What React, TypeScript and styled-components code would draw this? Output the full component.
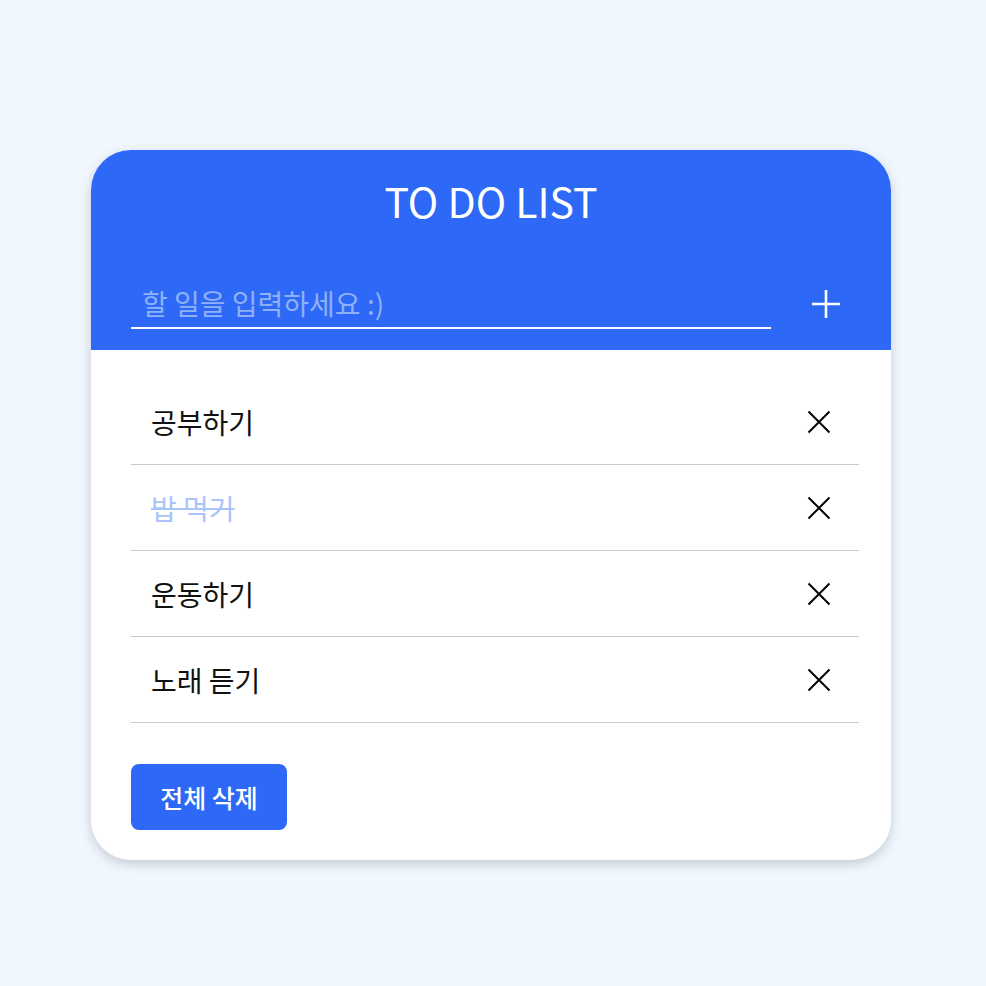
import React from "react";
import styled, { createGlobalStyle } from "styled-components";

const Global = createGlobalStyle`
  html, body { margin: 0; padding: 0; background: #f0f7ff; }
  body { font-family: "Noto Sans CJK KR", "Noto Sans", sans-serif; }
  * { box-sizing: border-box; }
`;

const Page = styled.div`
  width: 986px;
  height: 986px;
  padding: 150px 0 0 91px;
`;

const Card = styled.div`
  width: 800px;
  height: 710px;
  background: #fff;
  border-radius: 40px;
  overflow: hidden;
  box-shadow: 0 4px 12px rgba(0, 0, 0, 0.18);
  display: flex;
  flex-direction: column;
`;

const Header = styled.div`
  background: #2d69f6;
  height: 200px;
  padding: 18px 40px 0;
  display: flex;
  flex-direction: column;
`;

const Title = styled.h1`
  margin: 0;
  text-align: center;
  color: #fff;
  font-size: 41px;
  font-weight: 400;
  line-height: 64px;
`;

const InputRow = styled.div`
  display: flex;
  align-items: center;
  gap: 30px;
  margin-top: 47px;
`;

const Input = styled.input`
  flex: 1;
  height: 50px;
  background: transparent;
  border: none;
  border-bottom: 2px solid #fff;
  outline: none;
  padding: 0 11px;
  color: #fff;
  font-family: "Noto Sans CJK KR", sans-serif;
  font-size: 28px;
  &::placeholder { color: #8fb1f7; }
`;

const IconButton = styled.button<{ $size: number }>`
  width: ${(p) => p.$size}px;
  height: ${(p) => p.$size}px;
  background: transparent;
  border: none;
  padding: 0;
  display: flex;
  align-items: center;
  justify-content: center;
  cursor: pointer;
`;

const Body = styled.div`
  padding: 29px 32px 0 40px;
  display: flex;
  flex-direction: column;
`;

const List = styled.ul`
  list-style: none;
  margin: 0;
  padding: 0;
`;

const Item = styled.li`
  height: 86px;
  border-bottom: 1.5px solid #cbcbcb;
  display: flex;
  align-items: center;
  justify-content: space-between;
  padding: 0 28px 0 20px;
`;

const ItemText = styled.span<{ $done?: boolean }>`
  font-size: 28px;
  color: ${(p) => (p.$done ? "#a9c4fb" : "#111")};
  text-decoration: ${(p) => (p.$done ? "line-through" : "none")};
  text-decoration-thickness: 2px;
`;

const DeleteAll = styled.button`
  margin-top: 41px;
  align-self: flex-start;
  width: 156px;
  height: 66px;
  border: none;
  border-radius: 8px;
  background: #2d69f6;
  color: #fff;
  font-family: "Noto Sans CJK KR", sans-serif;
  font-size: 25px;
  font-weight: 500;
`;

const PlusIcon = () => (
  <svg width="30" height="30" viewBox="0 0 30 30">
    <path d="M15 1V29M1 15H29" stroke="#fff" strokeWidth="2.6" />
  </svg>
);

const XIcon = () => (
  <svg width="24" height="24" viewBox="0 0 24 24">
    <path d="M1.5 1.5L22.5 22.5M22.5 1.5L1.5 22.5" stroke="#000" strokeWidth="2" />
  </svg>
);

const todos = [
  { text: "공부하기", done: false },
  { text: "밥 먹기", done: true },
  { text: "운동하기", done: false },
  { text: "노래 듣기", done: false },
];

export default function App() {
  return (
    <>
      <Global />
      <Page>
        <Card>
          <Header>
            <Title>TO DO LIST</Title>
            <InputRow>
              <Input placeholder="할 일을 입력하세요 :)" />
              <IconButton $size={50} aria-label="추가">
                <PlusIcon />
              </IconButton>
            </InputRow>
          </Header>
          <Body>
            <List>
              {todos.map((t) => (
                <Item key={t.text}>
                  <ItemText $done={t.done}>{t.text}</ItemText>
                  <IconButton $size={24} aria-label="삭제">
                    <XIcon />
                  </IconButton>
                </Item>
              ))}
            </List>
            <DeleteAll>전체 삭제</DeleteAll>
          </Body>
        </Card>
      </Page>
    </>
  );
}
